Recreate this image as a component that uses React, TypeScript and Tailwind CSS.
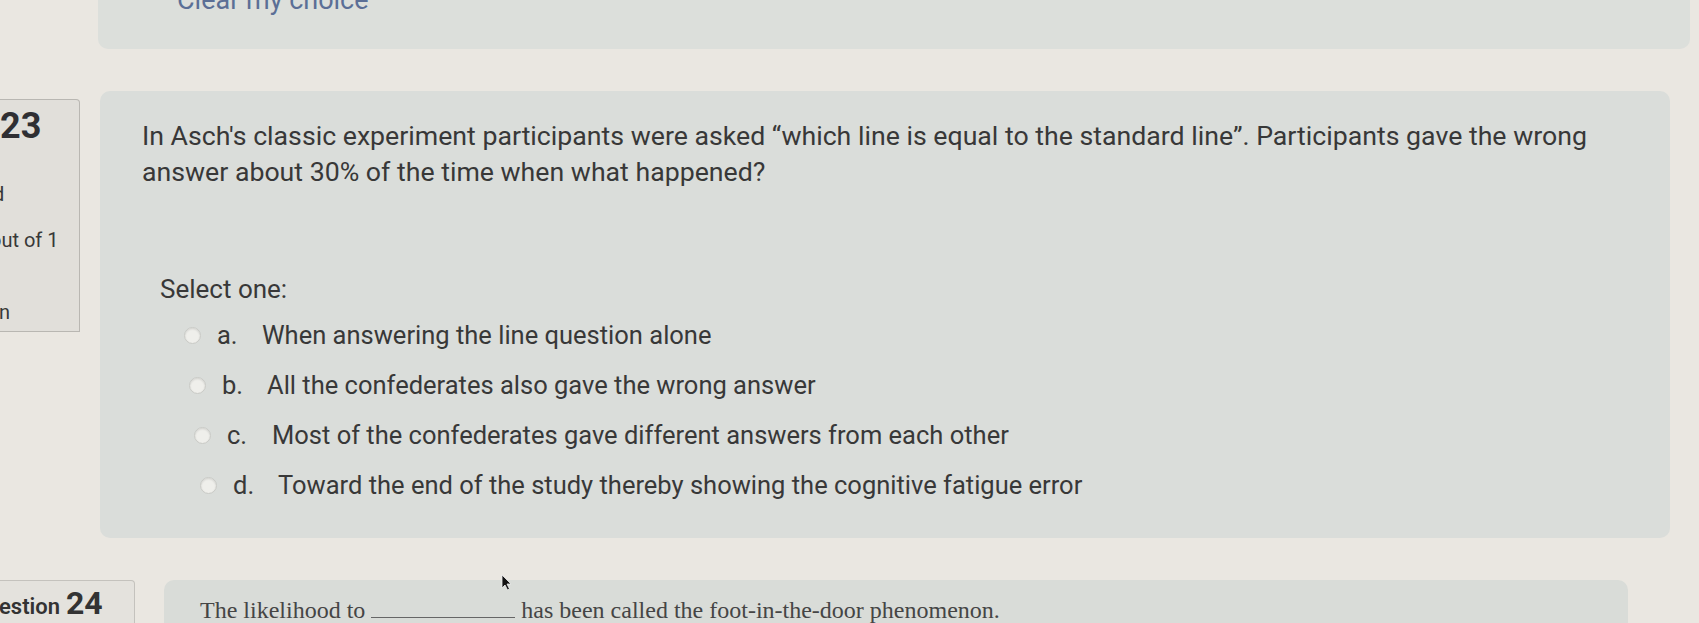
const options = [
  { key: 'a.', text: 'When answering the line question alone', indent: 'ml-[42px]' },
  { key: 'b.', text: 'All the confederates also gave the wrong answer', indent: 'ml-[47px]' },
  { key: 'c.', text: 'Most of the confederates gave different answers from each other', indent: 'ml-[52px]' },
  { key: 'd.', text: 'Toward the end of the study thereby showing the cognitive fatigue error', indent: 'ml-[58px]' },
];

function Radio() {
  return (
    <span className="block w-[17px] h-[17px] shrink-0 rounded-full bg-[#efefeb] border border-[#c9cac6] shadow-[inset_0_1px_2px_rgba(0,0,0,0.12)]" />
  );
}

function Cursor() {
  return (
    <svg className="absolute left-[501px] top-[574px]" width="11" height="17" viewBox="0 0 11 17">
      <path d="M1 1 L1 14 L4 11 L6.5 16 L8.5 15 L6 10 L10 10 Z" fill="#111" stroke="#eee" strokeWidth="0.8" />
    </svg>
  );
}

export default function App() {
  return (
    <div className="relative w-[1699px] h-[623px] overflow-hidden bg-[#eae7e1] font-['Roboto','Liberation_Sans',sans-serif] text-[#383838]">
      {/* previous question footer */}
      <div className="flex h-[49px]">
        <div className="ml-[98px] w-[1592px] rounded-b-[10px] bg-[#dcdfdb] overflow-hidden">
          <p className="-mt-[13px] ml-[79px] text-[27px] leading-[27px] text-[#5b6f96]">Clear my choice</p>
        </div>
      </div>

      {/* question 23 */}
      <div className="mt-[42px] flex items-start">
        <div className="mt-[8px] w-[80px] h-[233px] rounded-tr-[4px] border border-l-0 border-[#b9b7b2] bg-[#e1dfda]">
          <p className="mt-[6px] text-[36px] font-bold leading-[40px] text-[#2f2f33]">23</p>
          <p className="mt-[36px] -ml-[7px] text-[20px] leading-[24px]">d</p>
          <p className="mt-[22px] -ml-[10px] text-[20px] leading-[24px]">out of 1</p>
          <p className="mt-[48px] -ml-[1px] text-[20px] leading-[24px]">n</p>
        </div>
        <div className="ml-[20px] w-[1570px] h-[447px] rounded-[10px] bg-[#dadddA] pt-[27px] pl-[42px]">
          <p className="w-[1480px] text-[26.7px] leading-[36px]">
            In Asch's classic experiment participants were asked “which line is equal to the standard line”. Participants gave the wrong answer about 30% of the time when what happened?
          </p>
          <p className="mt-[81px] ml-[18px] text-[26px] leading-[36px]">Select one:</p>
          <div className="mt-[10px] flex flex-col gap-[14px]">
            {options.map((o) => (
              <div key={o.key} className={`flex items-center h-[36px] ${o.indent}`}>
                <Radio />
                <span className="ml-[16px] w-[45px] text-[25.5px] leading-[36px]">{o.key}</span>
                <span className="text-[25.5px] leading-[36px]">{o.text}</span>
              </div>
            ))}
          </div>
        </div>
      </div>

      {/* question 24 */}
      <div className="mt-[42px] flex items-start">
        <div className="w-[135px] h-[60px] rounded-tr-[4px] border border-l-0 border-[#c4c2bd] bg-[#e4e2dd] pt-[2px]">
          <p className="-ml-[1px] flex items-baseline leading-[40px] text-[#333]">
            <span className="text-[22px] font-semibold">estion</span>
            <span className="ml-[6px] text-[32px] font-bold">24</span>
          </p>
        </div>
        <div className="ml-[29px] w-[1464px] h-[60px] rounded-t-[10px] bg-[#d9dcd8] pt-[14px] pl-[36px]">
          <p className="font-['Liberation_Serif',serif] text-[24px] leading-[30px] text-[#454545]">
            The likelihood to{' '}
            <span className="inline-block w-[144px] border-b border-[#666] align-baseline h-[24px]" />{' '}
            has been called the foot-in-the-door phenomenon.
          </p>
        </div>
      </div>

      <Cursor />
    </div>
  );
}
